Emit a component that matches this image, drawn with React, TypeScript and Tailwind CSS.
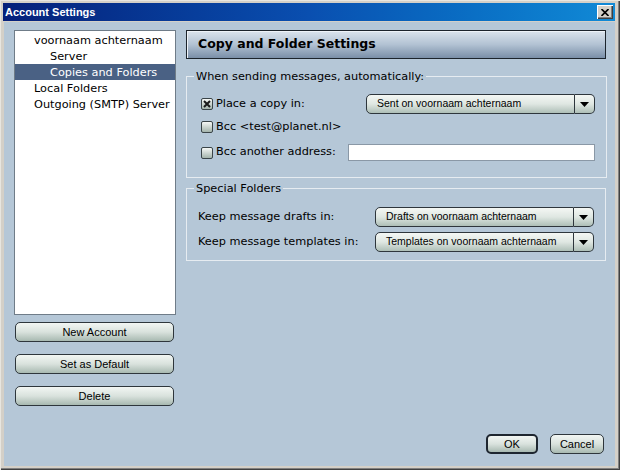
import React from 'react';

const sans = "font-['DejaVu_Sans',Verdana,sans-serif]";
const arial = "font-['Liberation_Sans',Arial,sans-serif]";

const Checkbox: React.FC<{ checked?: boolean }> = ({ checked }) => (
  <span className="w-[12px] h-[12px] shrink-0 rounded-[2px] border border-[#3a4448] bg-linear-to-b from-[#f6f8f6] to-[#a4b4ac] flex items-center justify-center">
    {checked && (
      <svg width="8" height="8" viewBox="0 0 8 8">
        <path d="M1 1L7 7M7 1L1 7" stroke="#1a1a1a" strokeWidth="2" />
      </svg>
    )}
  </span>
);

const Dropdown: React.FC<{ value: string; width: string }> = ({ value, width }) => (
  <div className={`flex h-[20px] ${width}`}>
    <div className={`flex-1 flex items-center pl-[10px] rounded-l-[5px] border border-[#2e363c] bg-linear-to-b from-[#f4f7f4] via-[#dfe7e2] to-[#aebfb7] text-[10.5px] text-black ${arial}`}>
      {value}
    </div>
    <div className="w-[20px] flex items-center justify-center rounded-r-[5px] border border-l-0 border-[#2e363c] bg-linear-to-b from-[#f4f7f4] via-[#dfe7e2] to-[#aebfb7]">
      <svg width="9" height="5" viewBox="0 0 9 5">
        <path d="M0 0H9L4.5 5Z" fill="#000" />
      </svg>
    </div>
  </div>
);

const Button: React.FC<{ label: string; className?: string; primary?: boolean }> = ({ label, className = '', primary }) => (
  <button
    className={`h-[20px] flex items-center justify-center rounded-[5px] ${primary ? 'border-2 border-[#1e2630]' : 'border border-[#2e363c]'} bg-linear-to-b from-[#f2f6f3] via-[#d9e2dd] to-[#a8b9b1] text-[11px] text-black ${arial} ${className}`}
  >
    {label}
  </button>
);

const treeItems = [
  { label: 'voornaam achternaam', level: 0 },
  { label: 'Server', level: 1 },
  { label: 'Copies and Folders', level: 1, selected: true },
  { label: 'Local Folders', level: 0 },
  { label: 'Outgoing (SMTP) Server', level: 0 },
];

export default function App() {
  return (
    <div className="w-[620px] h-[470px] bg-[#d4d0c8] pt-[3px] pl-[3px] pr-[5px] pb-[4px] flex flex-col shadow-[inset_1px_1px_0_#e8e6e0,inset_-1px_-1px_0_#404040,inset_-2px_-2px_0_#808080]">
      {/* title bar */}
      <div className="h-[18px] shrink-0 flex items-center justify-between bg-linear-to-r from-[#06207a] via-[#0a4fb0] to-[#118ad6] pl-[2px] pr-[2px]">
        <span className={`text-white font-bold text-[11px] ${arial}`}>Account Settings</span>
        <button className="w-[16px] h-[14px] bg-[#d4d0c8] flex items-center justify-center shadow-[inset_1px_1px_0_#fff,inset_-1px_-1px_0_#404040,inset_-2px_-2px_0_#808080]">
          <svg width="8" height="7" viewBox="0 0 8 7">
            <path d="M0.5 0L7.5 7M7.5 0L0.5 7" stroke="#000" strokeWidth="1.6" />
          </svg>
        </button>
      </div>

      {/* body */}
      <div className={`flex-1 mt-[1px] ml-[1px] bg-[#b5c7d7] flex ${sans} text-[11.3px] text-black`}>
        {/* left column */}
        <div className="w-[162px] ml-[10px] mt-[8px] flex flex-col">
          <div className="h-[285px] bg-white border border-[#6f7c88] pt-[1px]">
            {treeItems.map((item) => (
              <div
                key={item.label}
                className={`h-[16px] flex items-center pt-[2px] whitespace-nowrap ${item.level === 0 ? 'pl-[19px]' : 'pl-[35px]'} ${item.selected ? 'bg-[#4a6184] text-white' : ''}`}
              >
                {item.label}
              </div>
            ))}
          </div>
          <div className="flex flex-col gap-[12px] mt-[7px] px-[1px]">
            <Button label="New Account" className="w-[159px]" />
            <Button label="Set as Default" className="w-[159px]" />
            <Button label="Delete" className="w-[159px]" />
          </div>
        </div>

        {/* right column */}
        <div className="w-[420px] ml-[10px] mt-[8px] flex flex-col">
          <div className="h-[29px] border border-[#1c242c] bg-linear-to-b from-[#dbe4ed] via-[#b2c2d3] to-[#7a8fa8] flex items-center pl-[11px] shadow-[inset_1px_1px_0_#eef3f8]">
            <span className="font-bold text-[12.5px]">Copy and Folder Settings</span>
          </div>

          <fieldset className="mt-[11px] h-[108px] border border-[#e6ecf1] pl-[14px] pr-[11px]">
            <legend className="ml-[-7px] px-[2px] leading-[13px]">When sending messages, automatically:</legend>
            <div className="mt-[11px] h-[20px] flex items-center">
              <Checkbox checked />
              <span className="ml-[3px] w-[150px]">Place a copy in:</span>
              <Dropdown value="Sent on voornaam achternaam" width="w-[229px]" />
            </div>
            <div className="mt-[6px] h-[14px] flex items-center">
              <Checkbox />
              <span className="ml-[3px]">Bcc &lt;test@planet.nl&gt;</span>
            </div>
            <div className="mt-[10px] h-[17px] flex items-center justify-between">
              <div className="flex items-center">
                <Checkbox />
                <span className="ml-[3px]">Bcc another address:</span>
              </div>
              <div className="w-[247px] h-[17px] bg-white border border-[#8a98a6]" />
            </div>
          </fieldset>

          <fieldset className="mt-[4px] h-[79px] border border-[#e6ecf1] pl-[11px] pr-[11px]">
            <legend className="ml-[-4px] px-[2px] leading-[13px]">Special Folders</legend>
            <div className="mt-[12px] h-[20px] flex items-center justify-between">
              <span>Keep message drafts in:</span>
              <Dropdown value="Drafts on voornaam achternaam" width="w-[219px]" />
            </div>
            <div className="mt-[5px] h-[20px] flex items-center justify-between">
              <span>Keep message templates in:</span>
              <Dropdown value="Templates on voornaam achternaam" width="w-[219px]" />
            </div>
          </fieldset>

          <div className="mt-auto mb-[12px] pr-[2px] flex justify-end gap-[12px]">
            <Button label="OK" primary className="w-[52px]" />
            <Button label="Cancel" className="w-[54px]" />
          </div>
        </div>
      </div>
    </div>
  );
}
